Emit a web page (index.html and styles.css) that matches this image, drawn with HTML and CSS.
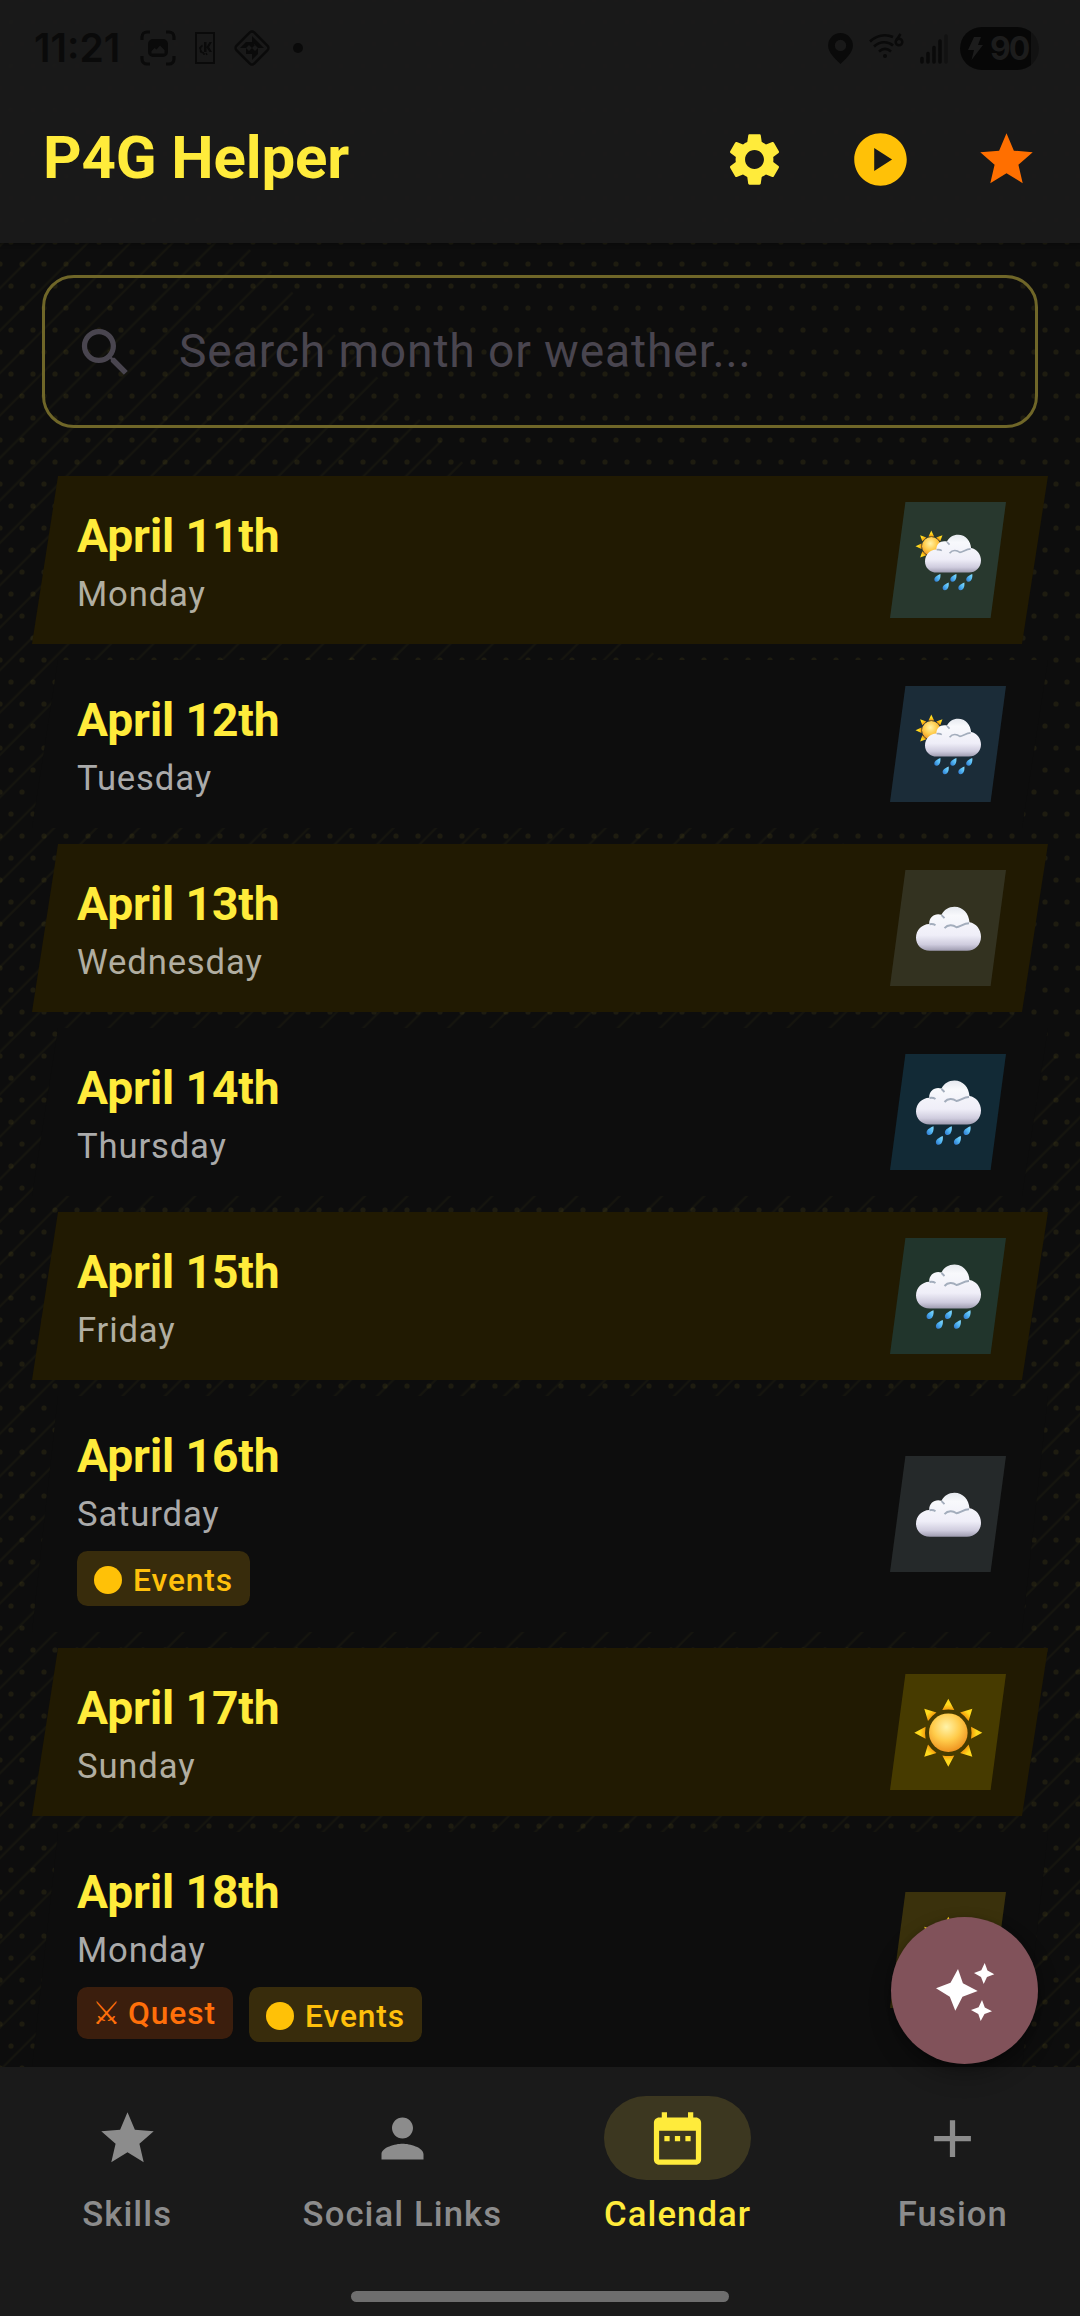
FILE: index.html
```html
<!DOCTYPE html>
<html lang="en">
<head>
<meta charset="utf-8">
<title>P4G Helper</title>
<link rel="stylesheet" href="styles.css">
</head>
<body>
<svg class="defs" width="0" height="0" aria-hidden="true">
  <defs>
    <linearGradient id="cloudFill" x1="0" y1="0" x2="0" y2="1">
      <stop offset="0" stop-color="#e6e9ef"/><stop offset=".2" stop-color="#f8f9fc"/>
      <stop offset=".65" stop-color="#efeef8"/><stop offset=".86" stop-color="#cfccde"/><stop offset="1" stop-color="#9f9cb0"/>
    </linearGradient>
    <radialGradient id="sunFill" cx=".45" cy=".35" r=".65">
      <stop offset="0" stop-color="#fff3a8"/><stop offset=".55" stop-color="#ffcb4a"/><stop offset="1" stop-color="#ef9420"/>
    </radialGradient>
    <linearGradient id="dropFill" x1="1" y1="0" x2="0" y2="1">
      <stop offset="0" stop-color="#8be0ff"/><stop offset=".5" stop-color="#4fb4f2"/><stop offset="1" stop-color="#2c6fc9"/>
    </linearGradient>
    <linearGradient id="rayFill" x1="0" y1="0" x2="0" y2="1">
      <stop offset="0" stop-color="#ffd21a"/><stop offset=".5" stop-color="#ffdc1e"/><stop offset="1" stop-color="#f59a0c"/>
    </linearGradient>
    <filter id="crease" x="-20%" y="-50%" width="140%" height="200%"><feGaussianBlur stdDeviation=".7"/></filter>
    <symbol id="cloud" viewBox="0 0 65 44" overflow="visible">
      <path d="M14 44C5.500 44 0 38 0 31C0 23 6 17.500 13.200 17.200C13 10 19 6 25.500 8C28 3 32.500 0 38.500 0C47 0 53 7 53.500 15.500C60 16.500 65 22.500 65 30C65 38 59 44 51 44Z" fill="url(#cloudFill)"/>
      <path d="M28.500 21.500C32 17.500 37 18 40.500 20.500C44 20 48 16.500 53 16.500M25.500 8.500C26.500 9.500 27.500 10.500 28.500 11.500M13.500 17.500C16 17 18 17.500 19.500 18.500" fill="none" stroke="#a3adbc" stroke-width="1.900" filter="url(#crease)"/>
    </symbol>
    <path id="drop" d="M3.500-4.500C4 0 2.500 4.300-.8 4.300C-3.200 4.300-4 2-3 0C-2-2 1-3.500 3.500-4.500Z" fill="url(#dropFill)"/>
    <g id="sun">
      <circle r="19.300" fill="url(#sunFill)"/>
      <g fill="url(#rayFill)">
        <path id="ray" d="M0-34L6-22.700Q0-23.800-6-22.700Z"/>
        <use href="#ray" transform="rotate(45)"/><use href="#ray" transform="rotate(90)"/><use href="#ray" transform="rotate(135)"/>
        <use href="#ray" transform="rotate(180)"/><use href="#ray" transform="rotate(225)"/><use href="#ray" transform="rotate(270)"/><use href="#ray" transform="rotate(315)"/>
      </g>
    </g>
    <symbol id="w-cloudy" viewBox="0 0 116 116"><use href="#cloud" x="26" y="36.700" width="65" height="44"/></symbol>
    <symbol id="w-rain" viewBox="0 0 116 116">
      <use href="#cloud" x="26" y="26.500" width="65" height="44"/>
      <use href="#drop" x="40" y="76.700"/><use href="#drop" x="58.300" y="76.700"/><use href="#drop" x="77" y="76.700"/>
      <use href="#drop" x="49.300" y="86.400"/><use href="#drop" x="67.300" y="86.400"/>
    </symbol>
    <symbol id="w-sunrain" viewBox="0 0 116 116">
      <g transform="translate(41.300 44.300)">
        <circle r="9.300" fill="url(#sunFill)"/>
        <g fill="url(#rayFill)">
          <path id="ray-s" d="M0-15.800L2.800-9.800H-2.800Z"/>
          <use href="#ray-s" transform="rotate(45)"/><use href="#ray-s" transform="rotate(225)"/>
          <use href="#ray-s" transform="rotate(270)"/><use href="#ray-s" transform="rotate(315)"/>
        </g>
      </g>
      <use href="#cloud" x="35" y="32.700" width="56" height="37.900"/>
      <g transform="translate(0 76)">
        <use href="#drop" transform="translate(47.300 0) scale(.88)"/><use href="#drop" transform="translate(63.300 0) scale(.88)"/><use href="#drop" transform="translate(79.200 0) scale(.88)"/>
        <use href="#drop" transform="translate(55.600 8.500) scale(.88)"/><use href="#drop" transform="translate(71.300 8.500) scale(.88)"/>
      </g>
    </symbol>
    <symbol id="w-sunny" viewBox="0 0 116 116"><use href="#sun" x="58.300" y="58.700"/></symbol>
    <symbol id="star" viewBox="0 0 24 24"><path d="M12 17.270L18.180 21l-1.640-7.030L22 9.240l-7.190-.61L12 2 9.190 8.630 2 9.240l5.460 4.730L5.820 21z"/></symbol>
  </defs>
</svg>

<div class="screen">
  <svg class="backdrop" width="1080" height="2316" aria-hidden="true">
    <defs>
      <pattern id="dots" width="22" height="44" patternUnits="userSpaceOnUse">
        <g fill="#ffeb3b" fill-opacity=".07">
          <circle cx="0" cy="0" r="2.600"/><circle cx="22" cy="0" r="2.600"/>
          <circle cx="0" cy="44" r="2.600"/><circle cx="22" cy="44" r="2.600"/>
          <circle cx="11" cy="22" r="2.600"/>
        </g>
      </pattern>
      <pattern id="hatch" width="30" height="30" patternUnits="userSpaceOnUse" patternTransform="rotate(45)">
        <path d="M23.700 0V30" stroke="#ffeb3b" stroke-opacity=".04" stroke-width="2"/>
      </pattern>
    </defs>
    <rect width="1080" height="2316" fill="url(#dots)"/>
    <path d="M0 0L1080 1080V2316H0Z" fill="url(#hatch)"/>
  </svg>

  <header class="app-header">
    <div class="status-bar">
      <div class="status-left">
        <span class="clock">11:21</span>
        <svg class="s-shot" viewBox="0 0 36 36"><path d="M2 10V7a5 5 0 0 1 5-5h3M26 2h3a5 5 0 0 1 5 5v3M34 26v3a5 5 0 0 1-5 5h-3M10 34H7a5 5 0 0 1-5-5v-3" fill="none" stroke="currentColor" stroke-width="3.200"/><path fill="currentColor" fill-rule="evenodd" d="M13 9h10a5 5 0 0 1 5 5v8a5 5 0 0 1-5 5H13a5 5 0 0 1-5-5v-8a5 5 0 0 1 5-5zM11.500 23.500h13v-3.500l-4.500-4.500-3.500 4-2-1.500-3 3z"/></svg>
        <svg class="s-kde" viewBox="0 0 20 32"><rect x="1" y="1" width="18" height="30" fill="none" stroke="currentColor" stroke-width="2"/><path d="M9 10h2.500v5l3-5h2.500l-3 5 3 5h-2.500l-3-4.500V20H9z" fill="currentColor"/><path d="M7.500 13.500a4 4 0 0 0 1.500 7.500M9 23v-2m3 2-1-2M4 16h2m-1 4 2-1" stroke="currentColor" stroke-width="1.500" fill="none"/></svg>
        <svg class="s-gem" viewBox="0 0 38 38"><rect x="6.500" y="6.500" width="25" height="25" rx="3" fill="none" stroke="currentColor" stroke-width="2.400" transform="rotate(45 19 19)"/><path fill="currentColor" d="M19 7v6h6zM13 13h6l-6 6zM25 13v6l-6-6zM13 13v6H7zM25 19h6l-6-6zM19 13l3 3-3 3-3-3zM13 19l6 6h-6zM25 19v6h-6zM19 19l3 3-3 3-3-3zM19 31v-6l6 0z"/></svg>
        <span class="s-dot"></span>
      </div>
      <div class="status-right">
        <svg class="s-pin" viewBox="0 0 24 30"><path fill="currentColor" fill-rule="evenodd" d="M12 0a12 12 0 0 1 12 12c0 7-7 13-12 18C7 25 0 19 0 12A12 12 0 0 1 12 0zm0 6.500a5.500 5.500 0 1 0 0 11 5.500 5.500 0 0 0 0-11z"/></svg>
        <svg class="s-wifi" viewBox="0 0 35 25"><g fill="none" stroke="currentColor" stroke-width="2.600"><path d="M1 8.500C7 2.500 16 .5 24 4"/><path d="M5 13.500c6-5.500 14-5.500 19-1"/><path d="M10 18.500c4-3.500 8-3.500 12 0"/></g><circle cx="16" cy="23" r="2" fill="currentColor"/><path d="M31.500 1l-4 6" stroke="currentColor" stroke-width="2.500"/><circle cx="30" cy="9" r="3.300" fill="none" stroke="currentColor" stroke-width="2.500"/></svg>
        <svg class="s-signal" viewBox="0 0 28 30"><g stroke="currentColor" stroke-width="3.600" stroke-linecap="round"><path d="M2 28v-3.500M8 28V19.500M14 28V13.500M20 28V7"/><path d="M26 28V2" opacity=".45"/></g></svg>
        <span class="battery"><svg viewBox="0 0 15 23"><path fill="currentColor" d="M6 0h7L10 8h5L3.500 23 6 13H0z"/></svg>90</span>
      </div>
    </div>
    <div class="toolbar">
      <h1>P4G Helper</h1>
      <div class="actions">
        <svg class="ic gear" viewBox="0 0 24 24"><path d="M19.140 12.940c.04-.3.06-.61.06-.94 0-.32-.02-.64-.07-.94l2.030-1.580c.18-.14.23-.41.12-.61l-1.920-3.320c-.12-.22-.37-.29-.59-.22l-2.390.96c-.5-.38-1.030-.7-1.620-.94l-.36-2.540c-.04-.24-.24-.41-.48-.41h-3.840c-.24 0-.43.17-.47.41l-.36 2.540c-.59.24-1.130.57-1.620.94l-2.390-.96c-.22-.08-.47 0-.59.22L2.740 8.870c-.12.21-.08.47.12.61l2.030 1.580c-.05.3-.09.63-.09.94s.02.64.07.94l-2.030 1.580c-.18.14-.23.41-.12.61l1.920 3.320c.12.22.37.29.59.22l2.390-.96c.5.38 1.030.7 1.620.94l.36 2.540c.05.24.24.41.48.41h3.840c.24 0 .44-.17.47-.41l.36-2.540c.59-.24 1.130-.56 1.620-.94l2.390.96c.22.08.47 0 .59-.22l1.920-3.320c.12-.22.07-.47-.12-.61zM12 15.600c-1.980 0-3.600-1.620-3.600-3.600s1.620-3.600 3.600-3.600 3.600 1.620 3.600 3.600-1.620 3.600-3.600 3.600z"/></svg>
        <svg class="ic play" viewBox="0 0 24 24"><path d="M12 2C6.480 2 2 6.480 2 12s4.480 10 10 10 10-4.480 10-10S17.520 2 12 2zM9.600 16.400V7.600l6.800 4.400z"/></svg>
        <svg class="ic fav" viewBox="0 0 24 24"><use href="#star"/></svg>
      </div>
    </div>
  </header>

  <main class="content">
    <div class="search">
      <svg class="ic" viewBox="0 0 24 24"><path d="M15.500 14h-.79l-.28-.27C15.410 12.590 16 11.110 16 9.500 16 5.910 13.090 3 9.500 3S3 5.910 3 9.500 5.910 16 9.500 16c1.610 0 3.090-.59 4.230-1.570l.27.28v.79l5 4.990L20.490 19l-4.990-5zm-6 0C7.010 14 5 11.990 5 9.500S7.010 5 9.500 5 14 7.010 14 9.500 11.990 14 9.500 14z"/></svg>
      <span>Search month or weather...</span>
    </div>
    <ul class="days">
      <li class="day lit"><div class="info"><h2>April 11th</h2><p>Monday</p></div><svg class="tile t1" viewBox="0 0 116 116"><use href="#w-sunrain"/></svg></li>
      <li class="day"><div class="info"><h2>April 12th</h2><p>Tuesday</p></div><svg class="tile t2" viewBox="0 0 116 116"><use href="#w-sunrain"/></svg></li>
      <li class="day lit"><div class="info"><h2>April 13th</h2><p>Wednesday</p></div><svg class="tile t3" viewBox="0 0 116 116"><use href="#w-cloudy"/></svg></li>
      <li class="day"><div class="info"><h2>April 14th</h2><p>Thursday</p></div><svg class="tile t4" viewBox="0 0 116 116"><use href="#w-rain"/></svg></li>
      <li class="day lit"><div class="info"><h2>April 15th</h2><p>Friday</p></div><svg class="tile t5" viewBox="0 0 116 116"><use href="#w-rain"/></svg></li>
      <li class="day"><div class="info"><h2>April 16th</h2><p>Saturday</p><div class="tags"><span class="tag events"><i></i>Events</span></div></div><svg class="tile t6" viewBox="0 0 116 116"><use href="#w-cloudy"/></svg></li>
      <li class="day lit"><div class="info"><h2>April 17th</h2><p>Sunday</p></div><svg class="tile t7" viewBox="0 0 116 116"><use href="#w-sunny"/></svg></li>
      <li class="day"><div class="info"><h2>April 18th</h2><p>Monday</p><div class="tags"><span class="tag quest"><b>⚔</b>Quest</span><span class="tag events"><i></i>Events</span></div></div><svg class="tile t8" viewBox="0 0 116 116"><use href="#w-sunny"/></svg></li>
    </ul>
  </main>

  <nav class="bottom-nav">
    <div class="tabs">
      <div class="tab"><span class="pill"><svg class="ic" viewBox="0 0 24 24"><use href="#star"/></svg></span><span>Skills</span></div>
      <div class="tab"><span class="pill"><svg class="ic" viewBox="0 0 24 24"><path d="M12 12c2.210 0 4-1.790 4-4s-1.790-4-4-4-4 1.790-4 4 1.790 4 4 4zm0 2c-2.670 0-8 1.340-8 4v2h16v-2c0-2.660-5.330-4-8-4z"/></svg></span><span>Social Links</span></div>
      <div class="tab active"><span class="pill"><svg class="ic" viewBox="0 0 24 24"><path d="M9 11H7v2h2zm4 0h-2v2h2zm4 0h-2v2h2zM19 4h-1V2h-2v2H8V2H6v2H5c-1.110 0-1.990.9-1.990 2L3 20c0 1.100.89 2 2 2h14c1.100 0 2-.9 2-2V6c0-1.100-.9-2-2-2zm0 16H5V9h14z"/></svg></span><span>Calendar</span></div>
      <div class="tab"><span class="pill"><svg class="ic" viewBox="0 0 24 24"><path d="M19 13h-6v6h-2v-6H5v-2h6V5h2v6h6z"/></svg></span><span>Fusion</span></div>
    </div>
    <div class="home-bar"></div>
  </nav>

  <div class="fab"><svg viewBox="0 0 147 147"><path d="M67 52L71.900 66.300 86.700 74 71.500 79.700 64.300 93.700 58.800 79.700 45 71.300 59.500 65.700ZM93.700 46L96.500 53.500 103.300 57.300 96 60 92.700 67 90 60 83 56 90.300 53.300ZM91 83L93.800 90.500 101 94.300 93.500 97 89.700 104 87.300 97 80 93 87.600 90.300Z"/></svg></div>
</div>
</body>
</html>
```
FILE: styles.css
```css
* { box-sizing: border-box; margin: 0; padding: 0; }
body { background: #0d0d0d; font-family: Roboto, sans-serif; }
.defs { position: absolute; }
.screen { position: relative; width: 1080px; height: 2316px; overflow: hidden; display: flex; flex-direction: column; }
.backdrop { position: absolute; inset: 0; }
.ic { width: 63px; height: 63px; fill: currentColor; display: block; flex: none; }

.app-header { position: relative; height: 243px; background: rgba(26, 26, 26, .97); box-shadow: 0 1px 4px rgba(0, 0, 0, .35); }
.status-bar { height: 76px; padding: 0 41px 0 34px; display: flex; justify-content: space-between; color: #0a0a0a; }
.status-bar svg { display: block; flex: none; }
.status-left, .status-right { display: flex; align-items: center; padding-top: 20px; }
.clock { font: 600 39px/56px Inter, sans-serif; width: 106px; white-space: nowrap; }
.s-shot { width: 36px; height: 36px; }
.s-kde { width: 20px; height: 32px; margin-left: 19px; }
.s-gem { width: 38px; height: 38px; margin-left: 18px; }
.s-dot { width: 10px; height: 10px; border-radius: 50%; background: currentColor; margin-left: 22px; }
.s-pin { width: 25px; height: 31px; }
.s-wifi { width: 35px; height: 25px; margin: 0 16px 5px 16px; }
.s-signal { width: 28px; height: 30px; margin-top: 2px; margin-right: 12px; }
.battery { width: 79px; height: 43px; border-radius: 22px; background: linear-gradient(90deg, #070707 71px, #121212 71px); color: #1c1c1c; display: flex; align-items: center; padding-left: 8px; gap: 7px; font: 700 32px/43px Inter, sans-serif; letter-spacing: -2px; }
.battery svg { width: 15px; height: 23px; }
.toolbar { height: 167px; padding: 0 42px 0 43px; display: flex; align-items: center; justify-content: space-between; }
.toolbar h1 { font-size: 60px; line-height: 70px; font-weight: 700; letter-spacing: -.15px; color: #ffeb3b; padding-bottom: 3px; }
.actions { display: flex; gap: 63px; }
.gear { color: #ffeb3b; }
.play { color: #ffc107; }
.fav { color: #ff6f00; }

.content { position: relative; height: 1824px; padding: 32px 32px 0; overflow: hidden; }
.search { height: 153px; margin: 0 10px; border: 3px solid #6f6628; border-radius: 32px; padding-left: 29px; display: flex; align-items: center; gap: 42px; color: #49454f; font-size: 46.200px; letter-spacing: .87px; }
.search .ic { margin-top: 1px; }
.search span { line-height: 60px; padding-bottom: 2px; }
.days { list-style: none; margin-top: 48px; display: flex; flex-direction: column; gap: 16px; }
.day { padding: 26px 42px 26px 45px; display: flex; align-items: center; justify-content: space-between; background: #0d0d0d; clip-path: polygon(26px 0, 100% 0, calc(100% - 26px) 100%, 0 100%); }
.day.lit { background: #211a02; }
.day h2 { font-size: 46.200px; line-height: 68px; font-weight: 700; letter-spacing: -.1px; color: #ffeb3b; }
.day p { font-size: 34.650px; line-height: 48px; letter-spacing: .85px; color: #aaa; }
.day.lit p { color: #b1aea1; }
.tile { width: 116px; height: 116px; display: block; clip-path: polygon(15.400px 0, 100% 0, 100.600px 100%, 0 100%); }
.t1 { background: #28382e; }
.t2 { background: #1b2c38; }
.t3 { background: #333220; }
.t4 { background: #122a36; }
.t5 { background: #21352c; }
.t6 { background: #25292a; }
.t7 { background: #473b00; }
.t8 { background: #3a310c; }
.tags { display: flex; align-items: flex-start; gap: 16px; margin-top: 13px; }
.tag { display: flex; border-radius: 10.500px; padding: 0 16px; font-size: 31.760px; font-weight: 500; letter-spacing: .9px; }
.tag.events { width: 173px; height: 55px; line-height: 50px; padding-top: 5px; background: #382c0c; color: #ffc00c; }
.tag.events i { flex: none; width: 28px; height: 28px; border-radius: 50%; background: #ffc107; margin: 10px 11px 0 1px; }
.tag.quest { width: 156px; height: 52px; line-height: 51px; padding-top: 1px; background: #3b1e0d; color: #ff6f0a; }
.tag.quest b { font-weight: 400; width: 36px; margin-left: -1px; }

.bottom-nav { position: relative; height: 249px; background: #1a1a1a; display: flex; flex-direction: column; align-items: center; }
.tabs { align-self: stretch; height: 224px; padding-top: 29px; display: grid; grid-template-columns: repeat(4, 1fr); column-gap: 21px; }
.tab { display: flex; flex-direction: column; align-items: center; color: #8c8c8c; font-size: 34.650px; font-weight: 500; letter-spacing: 1.100px; line-height: 42px; gap: 13px; }
.pill { width: 147px; height: 84px; border-radius: 42px; display: flex; align-items: center; justify-content: center; }
.active { color: #ffeb3b; }
.active .pill { background: #3c3720; }
.home-bar { width: 378px; height: 11px; border-radius: 6px; background: #6e6e6e; }

.fab { position: absolute; left: 891px; top: 1917px; width: 147px; height: 147px; border-radius: 50%; background: #81525a; box-shadow: 0 12px 22px rgba(0, 0, 0, .25), 0 2px 6px rgba(0, 0, 0, .25); }
.fab svg { display: block; fill: #fff; }
```
